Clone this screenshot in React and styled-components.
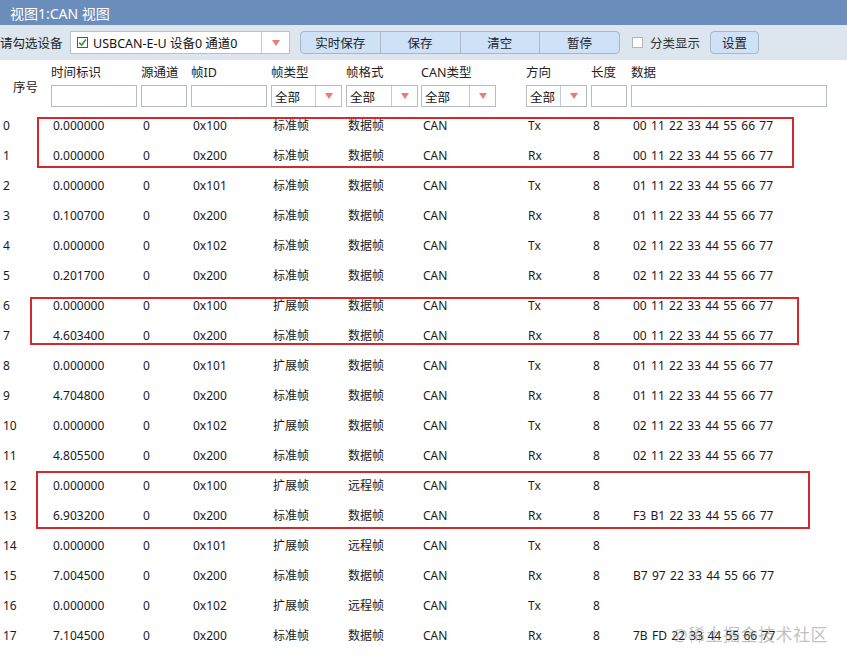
import React from "react";
import styled, { createGlobalStyle } from "styled-components";

const Global = createGlobalStyle`
  html, body { margin: 0; padding: 0; background: #fff; }
  body { font-family: "Noto Sans", "Noto Sans CJK SC", sans-serif; }
  * { box-sizing: border-box; }
`;

const COLS = "51px 90px 50px 80px 75px 75px 105px 65px 40px 196px";

const Window = styled.div`
  width: 847px;
  height: 662px;
  overflow: hidden;
  position: relative;
  background: #fff;
  font-family: "Noto Sans", "Noto Sans CJK SC", sans-serif;
  font-size: 12px;
  color: #1b1b1b;
`;

const TitleBar = styled.div`
  height: 25px;
  background: #6a8dbb;
  color: #fff;
  font-size: 14px;
  display: flex;
  align-items: center;
  padding-left: 10px;
`;

const Toolbar = styled.div`
  height: 35px;
  background: #dde5ee;
  display: flex;
  align-items: center;
  font-size: 12.5px;
`;

const ToolLabel = styled.span`
  width: 70px;
  color: #222;
`;

const Combo = styled.div`
  width: 220px;
  height: 23px;
  background: #fff;
  border: 1px solid #b9c1cb;
  display: flex;
  align-items: center;
`;

const ComboText = styled.span`
  flex: 1;
  display: flex;
  align-items: center;
  gap: 5px;
  padding-left: 6px;
  color: #111;
`;

const CheckBox = styled.span`
  width: 11px;
  height: 11px;
  border: 1px solid ${(p) => (p.$checked ? "#555" : "#b5b5b5")};
  background: #fff;
  display: inline-flex;
  align-items: center;
  justify-content: center;
`;

const DropPart = styled.span`
  width: ${(p) => p.$w || 27}px;
  height: 100%;
  border-left: 1px solid #c4cad2;
  display: flex;
  align-items: center;
  justify-content: center;
`;

const Arrow = styled.span`
  width: 0;
  height: 0;
  border-left: 4px solid transparent;
  border-right: 4px solid transparent;
  border-top: 6px solid #ee7a72;
`;

const ButtonGroup = styled.div`
  margin-left: 10px;
  width: 320px;
  height: 23px;
  display: flex;
  border: 1px solid #a7b6c8;
  border-radius: 4px;
  background: #cee1f7;
  overflow: hidden;
`;

const GroupButton = styled.span`
  flex: 1;
  display: flex;
  align-items: center;
  justify-content: center;
  color: #222;
  & + & { border-left: 1px solid #aab7c6; }
`;

const CheckLabel = styled.span`
  margin-left: 12px;
  display: flex;
  align-items: center;
  gap: 7px;
  color: #333;
`;

const Button = styled.span`
  margin-left: 10px;
  width: 49px;
  height: 23px;
  border: 1px solid #a7b6c8;
  border-radius: 4px;
  background: #cee1f7;
  display: flex;
  align-items: center;
  justify-content: center;
  color: #222;
`;

const Header = styled.div`
  height: 50px;
  display: grid;
  grid-template-columns: ${COLS};
  grid-template-rows: 25px 25px;
  font-size: 12.5px;
  color: #222;
`;

const SeqHead = styled.div`
  grid-row: 1 / 3;
  display: flex;
  align-items: center;
  justify-content: center;
  padding-top: 2px;
`;

const HeadLabel = styled.div`
  display: flex;
  align-items: center;
  padding-bottom: 2px;
`;

const FilterCell = styled.div``;

const Input = styled.div`
  width: ${(p) => p.$w}px;
  height: 22px;
  border: 1px solid #b7bcc3;
  background: #fff;
  display: flex;
  align-items: center;
`;

const SelectText = styled.span`
  flex: 1;
  padding-left: 3px;
  color: #111;
`;

const Body = styled.div`
  position: relative;
`;

const Row = styled.div`
  height: 30px;
  display: grid;
  grid-template-columns: ${COLS};
  align-items: center;
  font-size: 12px;
  color: #1a1a1a;
`;

const Cell = styled.span`
  padding-left: ${(p) => (p.$first ? 3 : 2)}px;
  white-space: nowrap;
  word-spacing: ${(p) => (p.$data ? "1.2px" : "0")};
`;

const Mark = styled.div`
  position: absolute;
  border: 2px solid #d4282f;
  pointer-events: none;
`;

const Watermark = styled.div`
  position: absolute;
  right: 19px;
  bottom: 16px;
  font-size: 17px;
  color: rgba(130, 130, 130, 0.5);
  letter-spacing: 0.5px;
`;

const filters = [
  { w: 86 },
  { w: 46 },
  { w: 76 },
  { w: 71, sel: true, dw: 26 },
  { w: 72, sel: true, dw: 26 },
  { w: 75, sel: true, dw: 26 },
  { w: 61, sel: true, dw: 26 },
  { w: 36 },
  { w: 196 },
];

const labels = ["时间标识", "源通道", "帧ID", "帧类型", "帧格式", "CAN类型", "方向", "长度", "数据"];

const rows = [
  ["0.000000", "0x100", "标准帧", "数据帧", "Tx", "00 11 22 33 44 55 66 77"],
  ["0.000000", "0x200", "标准帧", "数据帧", "Rx", "00 11 22 33 44 55 66 77"],
  ["0.000000", "0x101", "标准帧", "数据帧", "Tx", "01 11 22 33 44 55 66 77"],
  ["0.100700", "0x200", "标准帧", "数据帧", "Rx", "01 11 22 33 44 55 66 77"],
  ["0.000000", "0x102", "标准帧", "数据帧", "Tx", "02 11 22 33 44 55 66 77"],
  ["0.201700", "0x200", "标准帧", "数据帧", "Rx", "02 11 22 33 44 55 66 77"],
  ["0.000000", "0x100", "扩展帧", "数据帧", "Tx", "00 11 22 33 44 55 66 77"],
  ["4.603400", "0x200", "标准帧", "数据帧", "Rx", "00 11 22 33 44 55 66 77"],
  ["0.000000", "0x101", "扩展帧", "数据帧", "Tx", "01 11 22 33 44 55 66 77"],
  ["4.704800", "0x200", "标准帧", "数据帧", "Rx", "01 11 22 33 44 55 66 77"],
  ["0.000000", "0x102", "扩展帧", "数据帧", "Tx", "02 11 22 33 44 55 66 77"],
  ["4.805500", "0x200", "标准帧", "数据帧", "Rx", "02 11 22 33 44 55 66 77"],
  ["0.000000", "0x100", "扩展帧", "远程帧", "Tx", ""],
  ["6.903200", "0x200", "标准帧", "数据帧", "Rx", "F3 B1 22 33 44 55 66 77"],
  ["0.000000", "0x101", "扩展帧", "远程帧", "Tx", ""],
  ["7.004500", "0x200", "标准帧", "数据帧", "Rx", "B7 97 22 33 44 55 66 77"],
  ["0.000000", "0x102", "扩展帧", "远程帧", "Tx", ""],
  ["7.104500", "0x200", "标准帧", "数据帧", "Rx", "7B FD 22 33 44 55 66 77"],
];

const marks = [
  { left: 37, top: 7, width: 757, height: 51 },
  { left: 30, top: 187, width: 769, height: 48 },
  { left: 36, top: 361, width: 774, height: 58 },
];

const Check = () => (
  <svg width="9" height="9" viewBox="0 0 9 9">
    <path d="M1.2 4.6 L3.6 7 L7.9 1.6" fill="none" stroke="#2f9a3a" strokeWidth="1.6" />
  </svg>
);

export default function App() {
  return (
    <Window>
      <Global />
      <TitleBar>视图1:CAN 视图</TitleBar>
      <Toolbar>
        <ToolLabel>请勾选设备</ToolLabel>
        <Combo>
          <ComboText>
            <CheckBox $checked>
              <Check />
            </CheckBox>
            USBCAN-E-U 设备0 通道0
          </ComboText>
          <DropPart $w={28}>
            <Arrow />
          </DropPart>
        </Combo>
        <ButtonGroup>
          <GroupButton>实时保存</GroupButton>
          <GroupButton>保存</GroupButton>
          <GroupButton>清空</GroupButton>
          <GroupButton>暂停</GroupButton>
        </ButtonGroup>
        <CheckLabel>
          <CheckBox />
          分类显示
        </CheckLabel>
        <Button>设置</Button>
      </Toolbar>
      <Header>
        <SeqHead>序号</SeqHead>
        {labels.map((l) => (
          <HeadLabel key={l}>{l}</HeadLabel>
        ))}
        {filters.map((f, i) => (
          <FilterCell key={i}>
            <Input $w={f.w}>
              {f.sel && (
                <>
                  <SelectText>全部</SelectText>
                  <DropPart $w={f.dw}>
                    <Arrow />
                  </DropPart>
                </>
              )}
            </Input>
          </FilterCell>
        ))}
      </Header>
      <Body>
        {rows.map((r, i) => (
          <Row key={i}>
            <Cell $first>{i}</Cell>
            <Cell>{r[0]}</Cell>
            <Cell>0</Cell>
            <Cell>{r[1]}</Cell>
            <Cell>{r[2]}</Cell>
            <Cell>{r[3]}</Cell>
            <Cell>CAN</Cell>
            <Cell>{r[4]}</Cell>
            <Cell>8</Cell>
            <Cell $data>{r[5]}</Cell>
          </Row>
        ))}
        {marks.map((m, i) => (
          <Mark key={i} style={m} />
        ))}
      </Body>
      <Watermark>@稀土掘金技术社区</Watermark>
    </Window>
  );
}
